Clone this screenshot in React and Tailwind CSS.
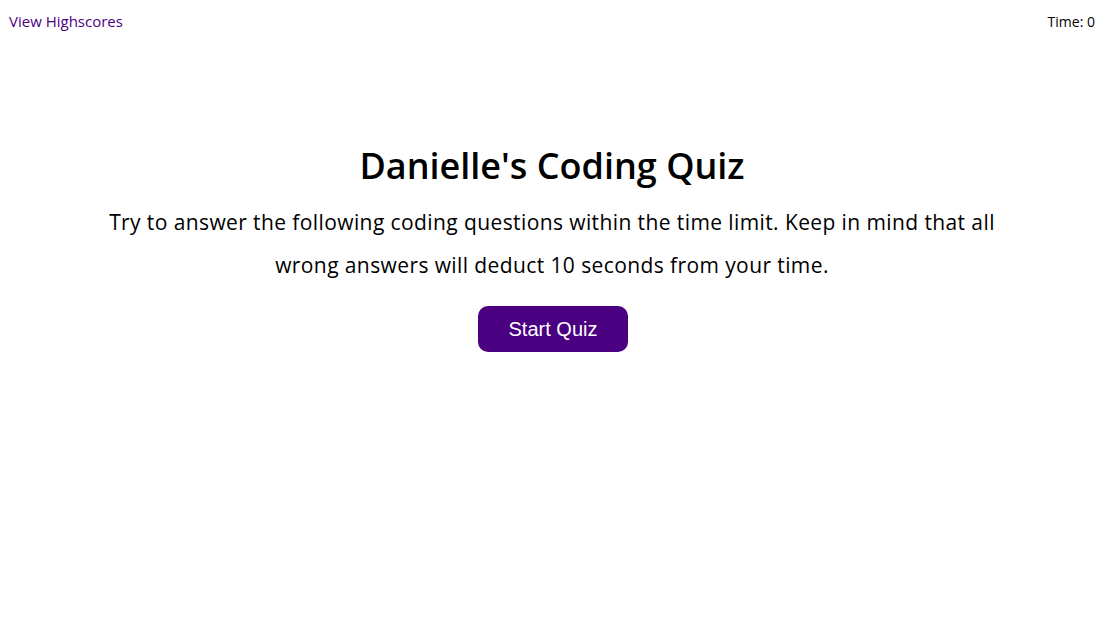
import React from "react";

export default function App() {
  return (
    <div className="min-h-screen bg-white font-['Open_Sans',sans-serif] text-black">
      <header className="flex items-center justify-between px-[9px] h-[43px] text-[14px]">
        <a href="#" className="text-[#4b0082] text-[15px]">View Highscores</a>
        <span>Time: 0</span>
      </header>

      <main className="flex flex-col items-center pt-[98px] text-center">
        <h1 className="text-[36px] font-semibold leading-[50px]">Danielle's Coding Quiz</h1>
        <p className="mt-[10px] text-[21px] leading-[43px] tracking-[0.4px]">
          Try to answer the following coding questions within the time limit. Keep in mind that all
          <br />
          wrong answers will deduct 10 seconds from your time.
        </p>
        <button className="mt-[19px] ml-[2px] w-[150px] h-[46px] rounded-[10px] bg-[#4b0082] text-white text-[20px] font-['Liberation_Sans',sans-serif]">
          Start Quiz
        </button>
      </main>
    </div>
  );
}
